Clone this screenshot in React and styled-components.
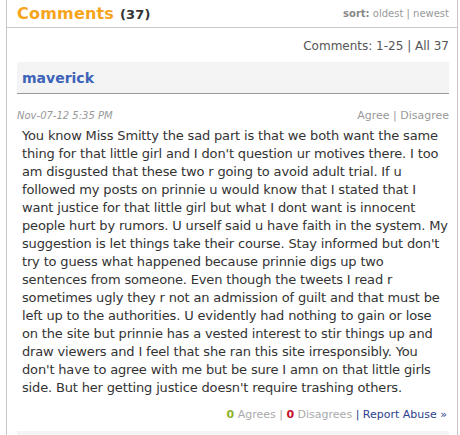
import React from 'react'
import styled, { createGlobalStyle } from 'styled-components'

const GlobalStyle = createGlobalStyle`
    body {
        margin: 0;
        background: #fff;
        font-family: "DejaVu Sans", Verdana, sans-serif;
    }
`

const lines = [
    'You know Miss Smitty the sad part is that we both want the same',
    "thing for that little girl and I don't question ur motives there. I too",
    'am disgusted that these two r going to avoid adult trial. If u',
    'followed my posts on prinnie u would know that I stated that I',
    'want justice for that little girl but what I dont want is innocent',
    'people hurt by rumors. U urself said u have faith in the system. My',
    "suggestion is let things take their course. Stay informed but don't",
    'try to guess what happened because prinnie digs up two',
    'sentences from someone. Even though the tweets I read r',
    'sometimes ugly they r not an admission of guilt and that must be',
    'left up to the authorities. U evidently had nothing to gain or lose',
    'on the site but prinnie has a vested interest to stir things up and',
    'draw viewers and I feel that she ran this site irresponsibly. You',
    "don't have to agree with me but be sure I amn on that little girls",
    "side. But her getting justice doesn't require trashing others.",
]

function App() {
    return (
        <>
            <GlobalStyle />
            <Panel>
                <Header>
                    <Title>
                        Comments <Count>(37)</Count>
                    </Title>
                    <Sort>
                        <b>sort:</b> oldest | newest
                    </Sort>
                </Header>
                <Pager>Comments: 1-25 | All 37</Pager>
                <Comment>
                    <NameBox>maverick</NameBox>
                    <Meta>
                        <Date>Nov-07-12 5:35 PM</Date>
                        <Vote>Agree | Disagree</Vote>
                    </Meta>
                    <Body>
                        {lines.map((l, i) => (
                            <Line key={i}>{l}</Line>
                        ))}
                    </Body>
                    <Footer>
                        <Num color="#8db32a">0</Num> Agrees | <Num color="#c8102e">0</Num> Disagrees{' '}
                        <Report>| Report Abuse »</Report>
                    </Footer>
                </Comment>
                <NextBox />
            </Panel>
        </>
    )
}

export default App

const Panel = styled.div`
    margin-left: 6px;
    width: 450px;
    height: 100vh;
    overflow: hidden;
    border-left: 1px solid #c8c8c8;
    border-right: 1px solid #c8c8c8;
`

const Header = styled.div`
    height: 27px;
    border-bottom: 1px solid #c8c8c8;
    display: flex;
    justify-content: space-between;
    align-items: center;
    padding: 0 8px 0 10px;
`

const Title = styled.div`
    color: #f7a41d;
    font-weight: bold;
    font-size: 16px;
    letter-spacing: 0.2px;
`

const Count = styled.span`
    color: #333;
    font-size: 13px;
`

const Sort = styled.div`
    font-size: 10px;
    color: #999;
    b {
        color: #888;
    }
`

const Pager = styled.div`
    text-align: right;
    font-size: 12px;
    color: #555;
    padding: 11px 8px 0 0;
    height: 23px;
`

const Comment = styled.div`
    margin: 0 8px 0 10px;
`

const NameBox = styled.div`
    background: #f4f4f4;
    height: 31px;
    border-bottom: 1px solid #999;
    padding-left: 5px;
    display: flex;
    align-items: center;
    font-size: 14px;
    font-weight: bold;
    color: #3d63b8;
`

const NextBox = styled.div`
    background: #f4f4f4;
    height: 31px;
    margin: 0 8px 0 10px;
`

const Meta = styled.div`
    display: flex;
    justify-content: space-between;
    align-items: center;
    height: 16px;
    margin-top: 13px;
`

const Date = styled.span`
    font-size: 10px;
    font-style: italic;
    color: #999;
`

const Vote = styled.span`
    font-size: 11px;
    color: #999;
`

const Body = styled.div`
    padding: 0 0 0 5px;
    margin-top: 4px;
    font-size: 13px;
    line-height: 18px;
    letter-spacing: -0.16px;
    color: #333;
`

const Line = styled.div`
    white-space: nowrap;
`

const Footer = styled.div`
    text-align: right;
    font-size: 11px;
    color: #aaa;
    padding: 11px 2px 0 0;
    height: 23px;
`

const Num = styled.b`
    color: ${p => p.color};
`

const Report = styled.span`
    color: #2d3f8c;
`
